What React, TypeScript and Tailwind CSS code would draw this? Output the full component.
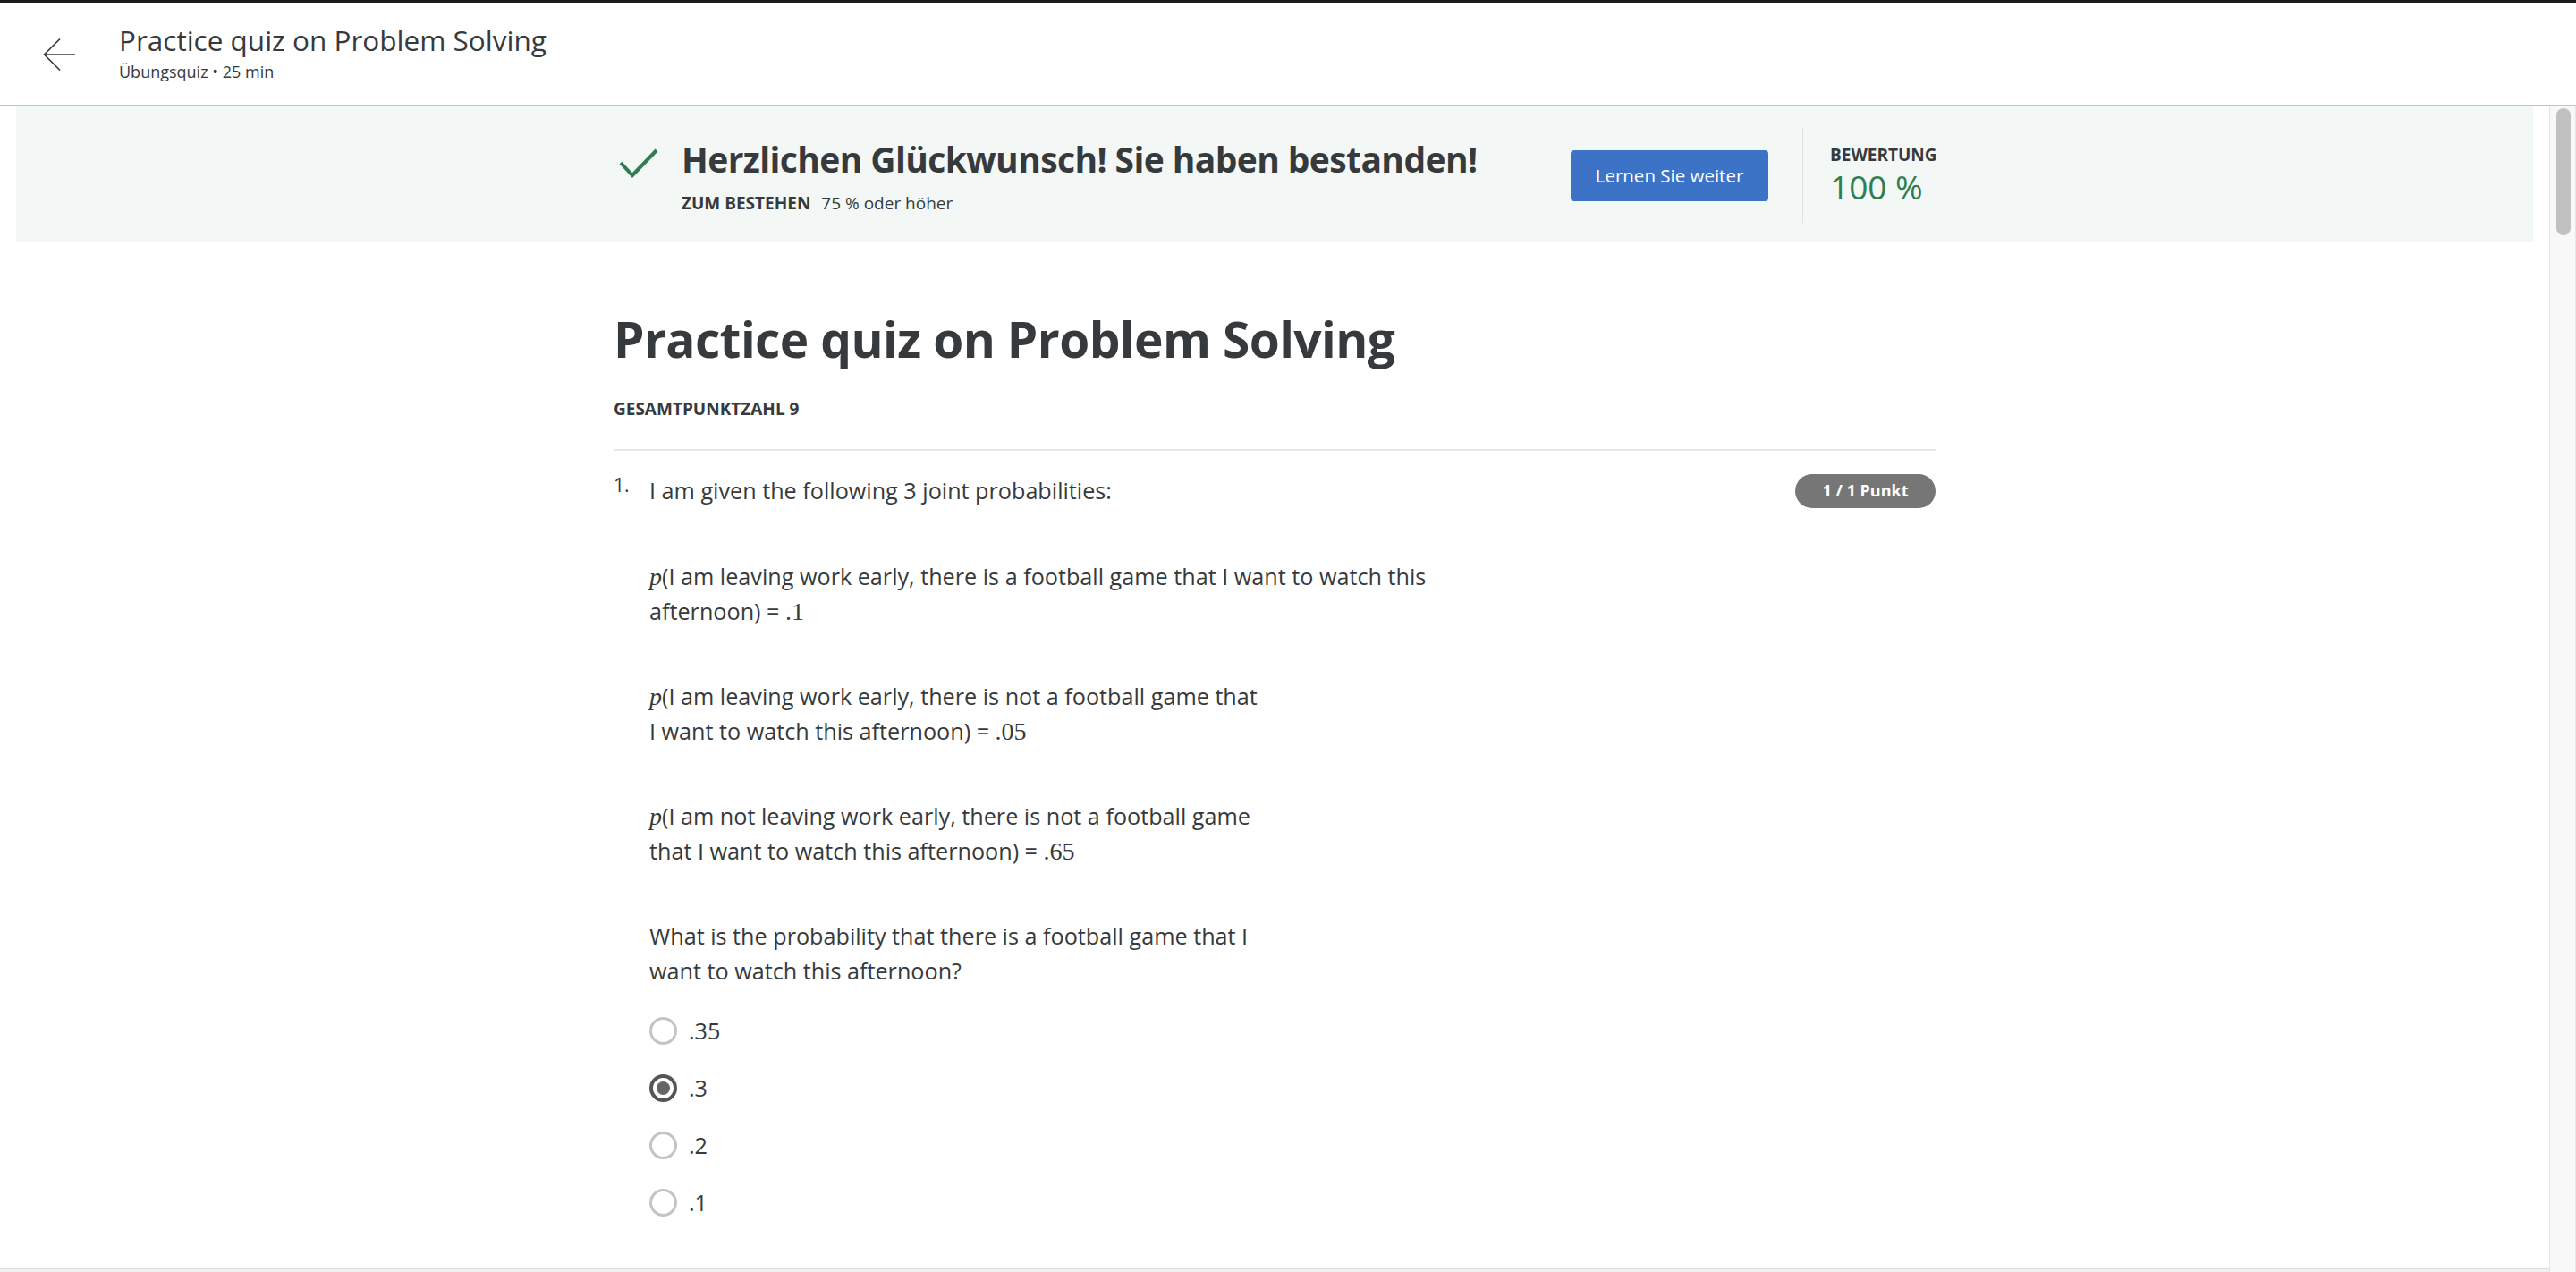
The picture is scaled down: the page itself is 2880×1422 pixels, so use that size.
import React from "react";

const Math = ({ children, italic }: { children: React.ReactNode; italic?: boolean }) => (
  <span
    className={`font-['Liberation_Serif',serif] text-[28px] ${italic ? "italic" : ""}`}
  >
    {children}
  </span>
);

const Radio = ({ checked }: { checked?: boolean }) =>
  checked ? (
    <span className="w-[31px] h-[31px] rounded-full border-[4px] border-[#555] flex items-center justify-center">
      <span className="w-[15px] h-[15px] rounded-full bg-[#666]" />
    </span>
  ) : (
    <span className="w-[31px] h-[31px] rounded-full border-[3px] border-[#c4c4c4]" />
  );

const options = [
  { label: ".35", checked: false },
  { label: ".3", checked: true },
  { label: ".2", checked: false },
  { label: ".1", checked: false },
];

export default function App() {
  return (
    <div className="h-[1422px] w-[2880px] overflow-hidden flex flex-col bg-white font-['Open_Sans',sans-serif] text-[#373a3c]">
      <div className="h-[3px] bg-[#1c1c1c]" />

      {/* Header */}
      <header className="h-[115px] shrink-0 border-b border-[#c4c4c4] flex items-start pl-[48px] pt-[22px]">
        <svg
          className="mt-[18px]"
          width="36"
          height="36"
          viewBox="0 0 36 36"
          fill="none"
          stroke="#373a3c"
          strokeWidth={1.6}
        >
          <path d="M36 18H1.5M19 0.5L1.5 18L19 35.5" />
        </svg>
        <div className="ml-[49px] flex flex-col">
          <h2 className="text-[31.5px] leading-[40px]">Practice quiz on Problem Solving</h2>
          <p className="mt-[3px] text-[18px] leading-[24px]">Übungsquiz • 25 min</p>
        </div>
      </header>

      <div className="flex flex-1 min-h-0">
        <main className="relative flex-1 overflow-hidden">
          {/* Result banner */}
          <div className="mx-[18px] mt-px h-[151px] bg-[#f3f8f6] flex items-center">
            <div className="w-[1478px] mx-auto pt-[3px] flex items-center">
              <div className="flex items-start">
                <svg
                  className="ml-[5px] mt-[11px]"
                  width="46"
                  height="36"
                  viewBox="-2 -2 46 36"
                  fill="none"
                  stroke="#2f7d50"
                  strokeWidth={4}
                >
                  <polyline points="1,15 14,29 41,1" />
                </svg>
                <div className="ml-[25px] flex flex-col">
                  <h3 className="text-[39px] leading-[48px] font-bold tracking-[-0.6px]">
                    Herzlichen Glückwunsch! Sie haben bestanden!
                  </h3>
                  <div className="mt-[13px] flex items-baseline text-[19px] leading-[24px]">
                    <span className="font-bold">ZUM BESTEHEN</span>
                    <span className="ml-[12px]">75 % oder höher</span>
                  </div>
                </div>
              </div>
              <button className="ml-auto w-[221px] h-[57px] rounded-[4px] bg-[#3c73c6] text-white text-[20.5px]">
                Lernen Sie weiter
              </button>
              <div className="ml-[38px] w-px h-[106px] bg-[#dde2df]" />
              <div className="ml-[30px] w-[118px] flex flex-col">
                <span className="text-[19px] leading-[24px] font-bold">BEWERTUNG</span>
                <span className="mt-[2px] text-[37px] leading-[44px] text-[#2f7d50]">100 %</span>
              </div>
            </div>
          </div>

          {/* Quiz content */}
          <div className="w-[1478px] mx-auto pt-[77px]">
            <h1 className="text-[55px] leading-[64px] font-bold tracking-[-0.6px]">
              Practice quiz on Problem Solving
            </h1>
            <p className="mt-[34px] text-[19px] leading-[24px] font-bold">GESAMTPUNKTZAHL 9</p>
            <div className="mt-[33px] h-[2px] bg-[#e8e8e8]" />

            <div className="mt-[25px] flex">
              <span className="w-[40px] pt-[2px] text-[21px] leading-[22px]">1.</span>
              <div className="flex-1 text-[25.2px] leading-[39px]">
                <div className="flex items-center justify-between">
                  <p>I am given the following 3 joint probabilities:</p>
                  <span className="w-[157px] h-[38px] rounded-full bg-[#767676] text-white text-[18px] font-bold flex items-center justify-center">
                    1 / 1 Punkt
                  </span>
                </div>

                <p className="mt-[57px]">
                  <Math italic>p</Math>(I am leaving work early, there is a football game that I want to watch this
                  <br />
                  afternoon) = <Math>.1</Math>
                </p>
                <p className="mt-[56px]">
                  <Math italic>p</Math>(I am leaving work early, there is not a football game that
                  <br />I want to watch this afternoon) = <Math>.05</Math>
                </p>
                <p className="mt-[56px]">
                  <Math italic>p</Math>(I am not leaving work early, there is not a football game
                  <br />
                  that I want to watch this afternoon) = <Math>.65</Math>
                </p>
                <p className="mt-[56px]">
                  What is the probability that there is a football game that I
                  <br />
                  want to watch this afternoon?
                </p>

                <div className="mt-[27px] flex flex-col gap-[24px]">
                  {options.map((o) => (
                    <div key={o.label} className="h-[40px] flex items-center">
                      <Radio checked={o.checked} />
                      <span className="ml-[13px]">{o.label}</span>
                    </div>
                  ))}
                </div>
              </div>
            </div>
          </div>

          {/* Sticky footer edge */}
          <div className="absolute bottom-0 left-0 right-0 h-[5px] bg-[#f0f0f0] border-t-2 border-[#dcdcdc] shadow-[0_-8px_50px_rgba(0,0,0,0.07)]" />
        </main>

        {/* Scrollbar */}
        <div className="w-[30px] shrink-0 bg-[#f8f8f8] border-l border-r border-[#e6e6e6]">
          <div className="mt-[3px] ml-[7px] w-[16px] h-[142px] rounded-full bg-[#c1c1c1]" />
        </div>
      </div>
    </div>
  );
}
